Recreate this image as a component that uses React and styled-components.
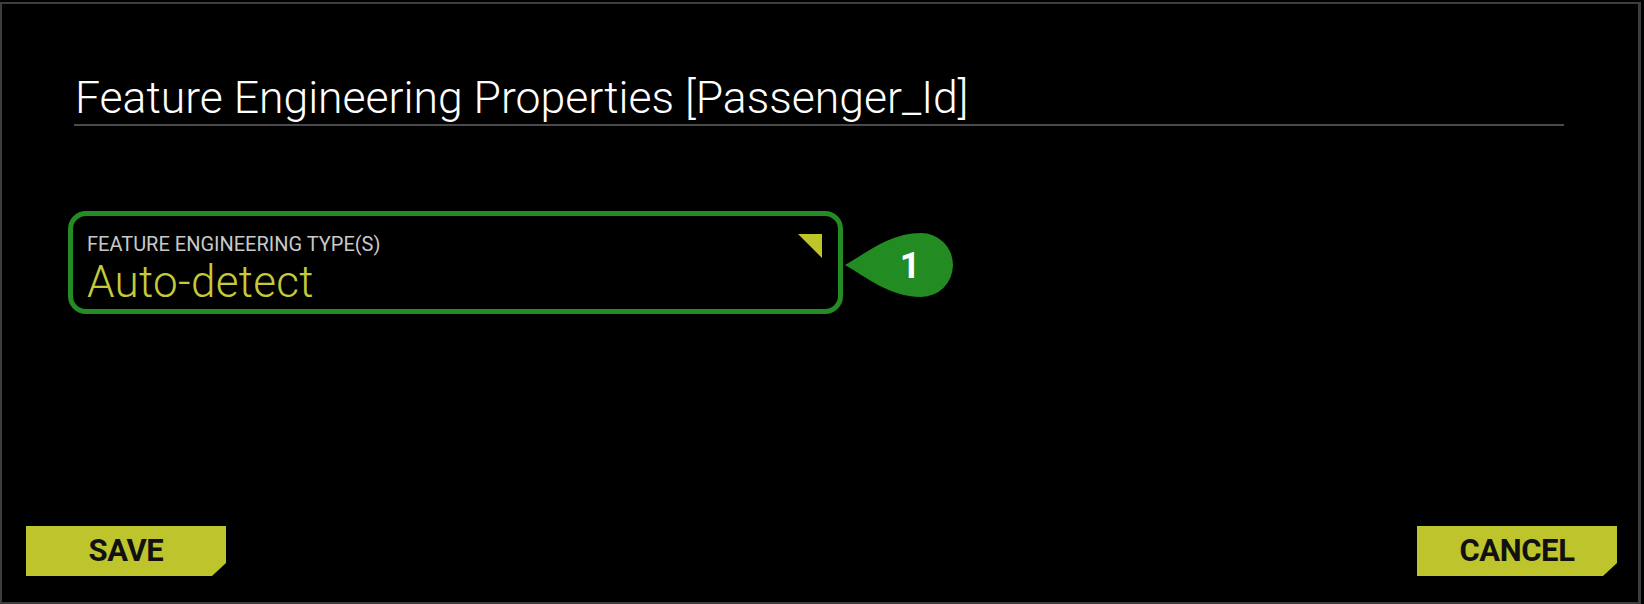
import React from 'react';
import styled, { createGlobalStyle } from 'styled-components';

const GlobalStyle = createGlobalStyle`
  html, body {
    margin: 0;
    padding: 0;
    background: #000;
  }
  body {
    font-family: Roboto, "Liberation Sans", sans-serif;
  }
`;

const Page = styled.div`
  width: 1644px;
  height: 604px;
  padding-top: 2px;
  box-sizing: border-box;
  background: #000;
  overflow: hidden;
`;

const Dialog = styled.div`
  width: 1641px;
  height: 602px;
  box-sizing: border-box;
  border: 2px solid #3d3d3d;
  border-right-width: 3px;
  background: #000;
  display: flex;
  flex-direction: column;
  padding: 0 21px 26px 24px;
`;

const Header = styled.div`
  margin: 0 53px 0 48px;
  padding-top: 68px;
  border-bottom: 2px solid #4a4a4a;
`;

const Title = styled.h1`
  margin: 0;
  font-family: Roboto, "Liberation Sans", sans-serif;
  font-weight: 300;
  font-size: 44.5px;
  line-height: 52px;
  color: #fff;
  padding-left: 1px;
`;

const FieldRow = styled.div`
  display: flex;
  align-items: center;
  margin: 85px 0 0 42px;
`;

const Field = styled.div`
  position: relative;
  width: 775px;
  height: 103px;
  box-sizing: border-box;
  border: 5px solid #248c24;
  border-radius: 18px;
  padding: 17px 0 0 14px;
  display: flex;
  flex-direction: column;
`;

const FieldLabel = styled.span`
  font-family: Roboto, "Liberation Sans", sans-serif;
  font-size: 20px;
  line-height: 22px;
  color: #c8c8c8;
  text-transform: uppercase;
`;

const FieldValue = styled.span`
  margin-top: 2px;
  font-family: Roboto, "Liberation Sans", sans-serif;
  font-weight: 300;
  font-size: 44px;
  line-height: 50px;
  letter-spacing: 0.3px;
  color: #c4ca3a;
`;

const Corner = styled.span`
  position: absolute;
  top: 18px;
  right: 16px;
  width: 24px;
  height: 24px;
  background: #bec52b;
  clip-path: polygon(0 0, 100% 0, 100% 100%);
`;

const Bubble = styled.svg`
  display: block;
  margin: 5px 0 0 2px;
`;

const Footer = styled.div`
  margin-top: auto;
  display: flex;
  justify-content: space-between;
  align-items: flex-end;
`;

const Button = styled.button`
  width: 200px;
  height: 50px;
  border: none;
  padding: 0;
  background: #bec42c;
  color: #111;
  font-family: "Liberation Sans Narrow", Roboto, "Liberation Sans", sans-serif;
  font-weight: 700;
  font-size: 31px;
  line-height: 50px;
  letter-spacing: -0.4px;
  text-transform: uppercase;
  cursor: pointer;
  clip-path: polygon(0 0, 100% 0, 100% calc(100% - 13px), calc(100% - 14px) 100%, 0 100%);
`;

export default function App() {
  return (
    <Page>
      <GlobalStyle />
      <Dialog>
        <Header>
          <Title>Feature Engineering Properties [Passenger_Id]</Title>
        </Header>
        <FieldRow>
          <Field>
            <FieldLabel>Feature Engineering Type(s)</FieldLabel>
            <FieldValue>Auto-detect</FieldValue>
            <Corner />
          </Field>
          <Bubble width="108" height="66" viewBox="0 0 108 66">
            <path
              d="M0 33 C 20 22 44 1 76 1 A 32 32 0 0 1 76 65 C 44 65 20 44 0 33 Z"
              fill="#228b22"
            />
            <text
              x="65"
              y="46"
              textAnchor="middle"
              fill="#fff"
              fontFamily="Roboto, 'Liberation Sans', sans-serif"
              fontWeight="700"
              fontSize="36"
            >
              1
            </text>
          </Bubble>
        </FieldRow>
        <Footer>
          <Button>Save</Button>
          <Button>Cancel</Button>
        </Footer>
      </Dialog>
    </Page>
  );
}
